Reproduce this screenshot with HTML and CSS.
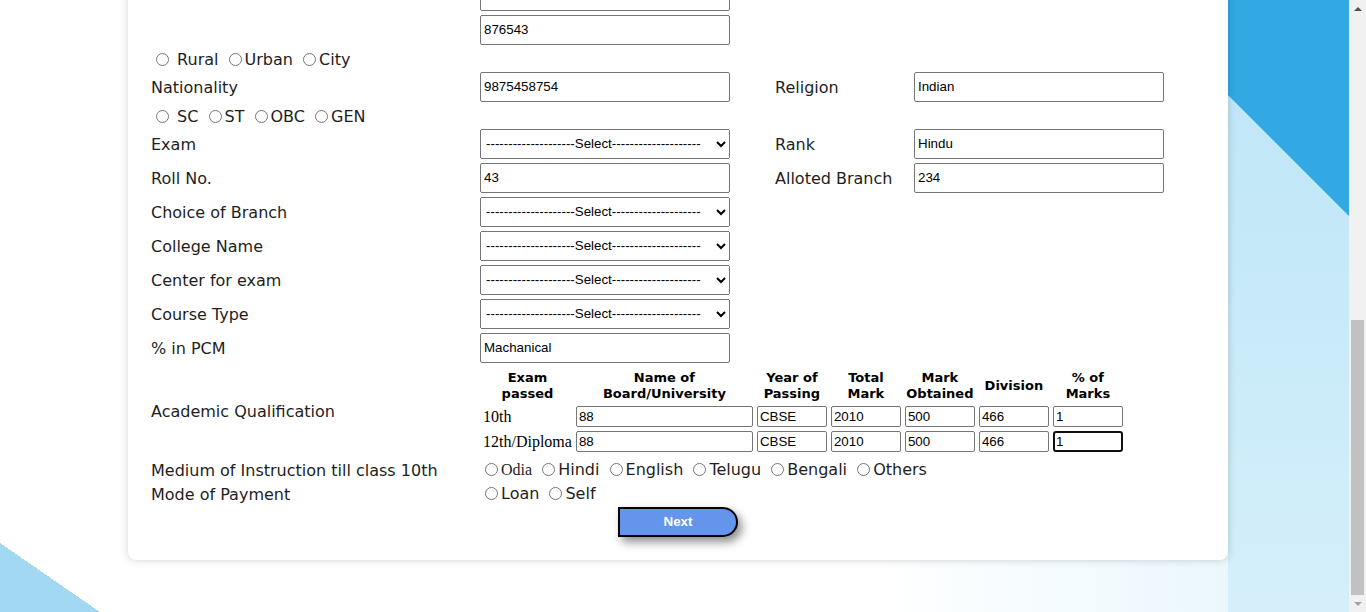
FILE: index.html
```html
<!DOCTYPE html>
<html lang="en">
<head>
<meta charset="utf-8">
<title>Application Form</title>
<link rel="stylesheet" href="styles.css">
</head>
<body>
<div class="page">
  <main class="main">
    <form class="card">
      <div class="row"><span></span><input class="field" type="text" value=""></div>
      <div class="row"><span></span><input class="field" type="text" value="876543"></div>
      <div class="radios"><input type="radio" name="area"> Rural <input type="radio" name="area">Urban <input type="radio" name="area">City</div>
      <div class="row"><label>Nationality</label><input class="field" type="text" value="9875458754"><label>Religion</label><input class="field" type="text" value="Indian"></div>
      <div class="radios"><input type="radio" name="cat"> SC <input type="radio" name="cat">ST <input type="radio" name="cat">OBC <input type="radio" name="cat">GEN</div>
      <div class="row"><label>Exam</label><select class="field"><option>--------------------Select--------------------</option></select><label>Rank</label><input class="field" type="text" value="Hindu"></div>
      <div class="row"><label>Roll No.</label><input class="field" type="text" value="43"><label>Alloted Branch</label><input class="field" type="text" value="234"></div>
      <div class="row"><label>Choice of Branch</label><select class="field"><option>--------------------Select--------------------</option></select></div>
      <div class="row"><label>College Name</label><select class="field"><option>--------------------Select--------------------</option></select></div>
      <div class="row"><label>Center for exam</label><select class="field"><option>--------------------Select--------------------</option></select></div>
      <div class="row"><label>Course Type</label><select class="field"><option>--------------------Select--------------------</option></select></div>
      <div class="row"><label>% in PCM</label><input class="field" type="text" value="Machanical"></div>
      <div class="row auto"><label>Academic Qualification</label>
        <table class="quals">
          <tr>
            <th>Exam passed</th><th>Name of Board/University</th><th>Year of Passing</th><th>Total Mark</th><th>Mark Obtained</th><th>Division</th><th>% of Marks</th>
          </tr>
          <tr>
            <td>10th</td>
            <td><input class="cell wide" type="text" value="88"></td>
            <td><input class="cell" type="text" value="CBSE"></td>
            <td><input class="cell" type="text" value="2010"></td>
            <td><input class="cell" type="text" value="500"></td>
            <td><input class="cell" type="text" value="466"></td>
            <td><input class="cell" type="text" value="1"></td>
          </tr>
          <tr>
            <td>12th/Diploma</td>
            <td><input class="cell wide" type="text" value="88"></td>
            <td><input class="cell" type="text" value="CBSE"></td>
            <td><input class="cell" type="text" value="2010"></td>
            <td><input class="cell" type="text" value="500"></td>
            <td><input class="cell" type="text" value="466"></td>
            <td><input class="cell focus" type="text" value="1"></td>
          </tr>
        </table>
      </div>
      <div class="row short"><label>Medium of Instruction till class 10th</label>
        <div class="opts"><input type="radio" name="med"><span class="serif">Odia</span> <input type="radio" name="med">Hindi <input type="radio" name="med">English <input type="radio" name="med">Telugu <input type="radio" name="med">Bengali <input type="radio" name="med">Others</div>
      </div>
      <div class="row short"><label>Mode of Payment</label>
        <div class="opts"><input type="radio" name="pay">Loan <input type="radio" name="pay">Self</div>
      </div>
      <div class="actions"><button type="button" class="next">Next</button></div>
    </form>
  </main>
  <div class="scrollbar">
    <div class="sb-btn"><span class="arrow up"></span></div>
    <div class="sb-track"><div class="sb-thumb"></div></div>
    <div class="sb-btn"><span class="arrow down"></span></div>
  </div>
</div>
</body>
</html>
```
FILE: styles.css
```css
html, body {
  margin: 0;
  padding: 0;
  height: 612px;
  overflow: hidden;
}

body {
  font-family: "DejaVu Sans", Verdana, sans-serif;
  font-size: 16px;
  color: #1e1e1e;
}

.page {
  display: flex;
  height: 612px;
}

.main {
  width: 1349px;
  height: 612px;
  overflow: hidden;
  background:
    linear-gradient(45deg, transparent 365px, #32a9e3 366px) right top / 121px 612px no-repeat,
    linear-gradient(to bottom, #bce5f7, #d4effa) right top / 121px 612px no-repeat,
    linear-gradient(to top right, #a2d8f2 50%, transparent 50%) left bottom / 100px 69px no-repeat,
    linear-gradient(to right, #ffffff 0%, #ffffff 65%, #e4f5fc 100%);
}

.card {
  box-sizing: border-box;
  width: 1100px;
  margin: -19px 0 0 128px;
  padding: 0 23px 23px;
  background: #fff;
  border-radius: 8px;
  box-shadow: 0 0 8px rgba(0, 0, 0, 0.18);
  display: flex;
  flex-direction: column;
  gap: 4px;
}

.row {
  display: grid;
  grid-template-columns: 329px 295px 139px 250px;
  align-items: center;
  height: 30px;
}

.row.auto {
  height: auto;
}

.row.short {
  height: 20px;
}

.row label {
  white-space: nowrap;
}

.field {
  box-sizing: border-box;
  width: 250px;
  height: 30px;
  margin: 0;
  font-family: "Liberation Sans", Arial, sans-serif;
  font-size: 13.33px;
  color: #000;
}

input.field {
  border: 1px solid #767676;
  border-radius: 2px;
  padding: 0 3px 2px;
  background: #fff;
}

select.field {
  padding: 0 0 1px 1px;
}

.radios {
  height: 19px;
  line-height: 21px;
  white-space: nowrap;
}

input[type="radio"] {
  width: 13px;
  height: 13px;
  margin: 0 3px 0 5px;
  vertical-align: -1px;
}

.quals {
  grid-column: 2 / 6;
  justify-self: start;
  width: min-content;
  font-family: "Liberation Serif", "Times New Roman", serif;
  font-size: 16px;
  color: #000;
  border-spacing: 2px;
}

.quals th {
  font-family: "DejaVu Sans", Verdana, sans-serif;
  font-size: 13px;
  font-weight: bold;
  line-height: 16px;
  padding: 1px;
  text-align: center;
  vertical-align: middle;
}

.quals td {
  padding: 1px;
  white-space: nowrap;
}

.cell {
  box-sizing: border-box;
  display: block;
  width: 70px;
  height: 21px;
  margin: 0;
  padding: 1px 2px;
  border: 1px solid #767676;
  border-radius: 2px;
  font-family: "Liberation Sans", Arial, sans-serif;
  font-size: 13.33px;
  color: #000;
}

.cell.wide {
  width: 177px;
}

.cell.focus {
  border: 2px solid #101010;
  border-radius: 3px;
  padding: 0 1px;
}

.opts {
  grid-column: 2 / 6;
  white-space: nowrap;
  line-height: 22px;
}

.serif {
  font-family: "Liberation Serif", "Times New Roman", serif;
}

.actions {
  display: flex;
  justify-content: center;
}

.next {
  box-sizing: border-box;
  width: 120px;
  height: 30px;
  margin: 0;
  padding: 0 0 2px;
  background: #6495ed;
  border: 2px solid #000;
  border-radius: 0 15px 15px 0;
  color: #fff;
  font-family: "Liberation Sans", Arial, sans-serif;
  font-size: 13.33px;
  font-weight: bold;
  box-shadow: 4px 5px 10px rgba(0, 0, 0, 0.45);
}

.scrollbar {
  width: 17px;
  height: 612px;
  background: #f1f1f1;
  display: flex;
  flex-direction: column;
}

.sb-btn {
  height: 17px;
  display: flex;
  align-items: center;
  justify-content: center;
}

.sb-track {
  flex: 1;
  display: flex;
  flex-direction: column;
}

.sb-thumb {
  margin: 303px 2px 0;
  height: 275px;
  background: #c1c1c1;
}

.arrow {
  width: 0;
  height: 0;
  border-left: 4px solid transparent;
  border-right: 4px solid transparent;
}

.arrow.up {
  border-bottom: 4px solid #505050;
}

.arrow.down {
  border-top: 4px solid #a3a3a3;
}
```
